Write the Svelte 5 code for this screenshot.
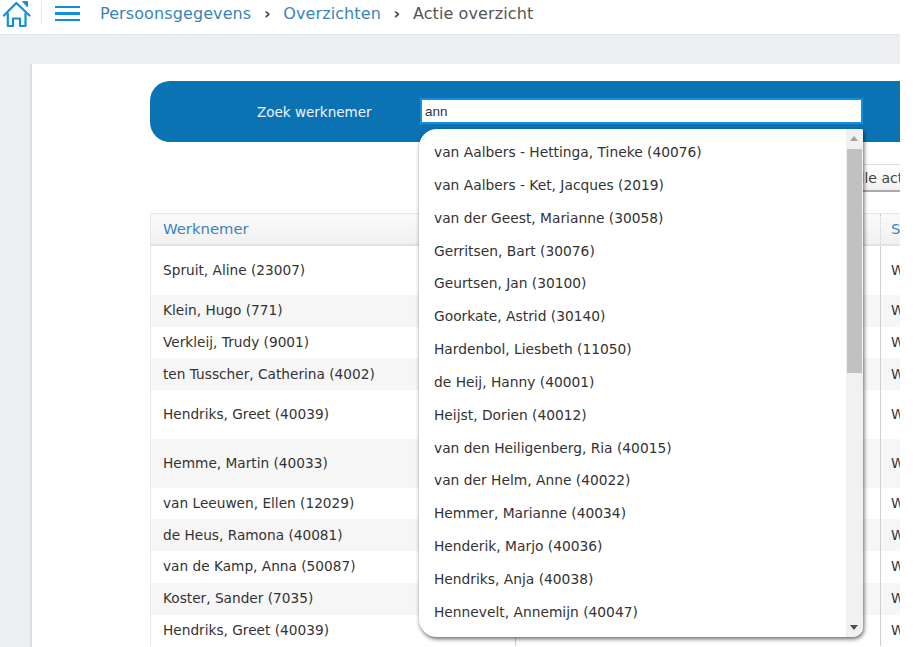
<script>
  const rows = [
    ['Spruit, Aline (23007)', 'tall'],
    ['Klein, Hugo (771)', 'alt'],
    ['Verkleij, Trudy (9001)', ''],
    ['ten Tusscher, Catherina (4002)', 'alt'],
    ['Hendriks, Greet (40039)', 'tall'],
    ['Hemme, Martin (40033)', 'tall alt'],
    ['van Leeuwen, Ellen (12029)', ''],
    ['de Heus, Ramona (40081)', 'alt'],
    ['van de Kamp, Anna (50087)', ''],
    ['Koster, Sander (7035)', 'alt'],
    ['Hendriks, Greet (40039)', '']
  ];
  const options = [
    'van Aalbers - Hettinga, Tineke (40076)',
    'van Aalbers - Ket, Jacques (2019)',
    'van der Geest, Marianne (30058)',
    'Gerritsen, Bart (30076)',
    'Geurtsen, Jan (30100)',
    'Goorkate, Astrid (30140)',
    'Hardenbol, Liesbeth (11050)',
    'de Heij, Hanny (40001)',
    'Heijst, Dorien (40012)',
    'van den Heiligenberg, Ria (40015)',
    'van der Helm, Anne (40022)',
    'Hemmer, Marianne (40034)',
    'Henderik, Marjo (40036)',
    'Hendriks, Anja (40038)',
    'Hennevelt, Annemijn (40047)'
  ];
</script>

<div class="page">
  <header class="topbar">
    <svg class="home" viewBox="0 0 30 28" width="30" height="28" aria-hidden="true">
      <path d="M1 15.5 L13.3 3 L26.5 15.5" fill="none" stroke="#0f8fdc" stroke-width="2.2" stroke-linejoin="round" stroke-linecap="round"/>
      <path d="M4.8 13 V26 H10 V18.5 H17 V26 H22.5 V13" fill="none" stroke="#0f8fdc" stroke-width="2.2" stroke-linejoin="round"/>
      <path d="M19.5 1.5 H24.5 V7 Z" fill="#0f8fdc" stroke="#0f8fdc" stroke-width="1"/>
    </svg>
    <span class="sep"></span>
    <span class="burger"><i></i><i></i><i></i></span>
    <nav class="crumbs">
      <a href="#p">Persoonsgegevens</a>
      <b>›</b>
      <a href="#o">Overzichten</a>
      <b>›</b>
      <span>Actie overzicht</span>
    </nav>
  </header>

  <main class="main">
    <section class="card">
      <div class="search">
        <label for="zoek">Zoek werknemer</label>
        <input id="zoek" value="ann" />
      </div>
      <div class="tools"><button>Alle acties</button></div>
      <div class="table">
        <div class="row head">
          <div class="cell">Werknemer</div>
          <div class="cell"></div>
          <div class="cell">Status</div>
        </div>
        {#each rows as r}
          <div class="row {r[1]}">
            <div class="cell">{r[0]}</div>
            <div class="cell"></div>
            <div class="cell">W</div>
          </div>
        {/each}
      </div>
    </section>
  </main>

  <div class="dropdown">
    <ul>
      {#each options as o}
        <li>{o}</li>
      {/each}
    </ul>
    <div class="scroll">
      <span class="arrow up"></span>
      <span class="thumb"></span>
      <span class="arrow down"></span>
    </div>
  </div>
</div>

<style>
  :global(body) {
    margin: 0;
    background: #fff;
  }
  .page {
    position: relative;
    width: 900px;
    height: 647px;
    overflow: hidden;
    background: #eceef1;
    font-family: "DejaVu Sans", sans-serif;
    font-size: 14px;
    color: #333;
  }
  .topbar {
    height: 34px;
    background: #fff;
    display: flex;
    align-items: center;
    padding-left: 3px;
    box-sizing: border-box;
    box-shadow: 0 1px 1px #e4e5e8;
  }
  .home {
    display: block;
    margin-top: -7px;
  }
  .sep {
    width: 1px;
    height: 24px;
    background: #e8e8e8;
    margin: -8px 13px 0 8px;
  }
  .burger {
    display: flex;
    flex-direction: column;
    gap: 4px;
    width: 25px;
    margin-top: -7px;
  }
  .burger i {
    height: 2.5px;
    background: #0f8fdc;
  }
  .crumbs {
    margin-left: 20px;
    display: flex;
    gap: 12px;
    align-items: baseline;
    font-size: 16px;
    margin-top: -8px;
    letter-spacing: 0.1px;
  }
  .crumbs a {
    color: #3b84b8;
    text-decoration: none;
  }
  .crumbs b {
    font-weight: 700;
    color: #444;
    width: 8px;
    text-align: center;
  }
  .crumbs span {
    color: #555;
  }
  .main {
    padding: 30px 0 0 30px;
  }
  .card {
    background: #fff;
    border-left: 2px solid #dcdcdc;
    padding: 17px 0 0 118px;
    height: 583px;
    box-sizing: border-box;
    overflow: hidden;
  }
  .search {
    height: 61px;
    width: 780px;
    background: #0b73b3;
    border-radius: 20px 0 0 20px;
    display: flex;
    align-items: center;
    box-sizing: border-box;
    padding-left: 107px;
  }
  .search label {
    width: 163px;
    color: #eef5fa;
    font-size: 13.5px;
    font-weight: 400;
  }
  .search input {
    width: 443px;
    height: 26px;
    box-sizing: border-box;
    margin-top: -1px;
    border: 2px solid #1490e0;
    outline: none;
    padding: 0 3px;
    font-family: "Liberation Sans", sans-serif;
    font-size: 13.5px;
    color: #333;
    background: #fff;
  }
  .tools {
    height: 71px;
    padding: 22px 0 0 692px;
    box-sizing: border-box;
  }
  .tools button {
    display: block;
    height: 28px;
    width: 100px;
    text-align: left;
    padding: 0 0 0 8px;
    white-space: nowrap;
    background: linear-gradient(#fff, #f1f1f1);
    border: 1px solid #ddd;
    border-bottom: 2px solid #aaa;
    font: 14px "DejaVu Sans", sans-serif;
    color: #444;
  }
  .table {
    width: 780px;
    border-left: 1px solid #e8e8e8;
  }
  .row {
    display: grid;
    grid-template-columns: 364px 365px 50px;
    height: 31.75px;
    align-items: stretch;
    font-size: 13.7px;
    color: #333;
  }
  .row.tall {
    height: 48.75px;
  }
  .row.alt {
    background: #f6f6f6;
  }
  .row.head {
    background: linear-gradient(#fafafa, #f1f1f1);
    border-top: 1px solid #e6e6e6;
    border-bottom: 2px solid #e2e2e2;
    color: #3b84b8;
    font-size: 14.8px;
    box-sizing: content-box;
    height: 30px;
  }
  .cell {
    display: flex;
    align-items: center;
    padding-left: 12px;
    padding-bottom: 1px;
    white-space: nowrap;
    overflow: hidden;
    box-sizing: border-box;
    border-left: 1px solid #cfcfcf;
  }
  .tall .cell {
    padding-bottom: 0;
  }
  .cell:first-child {
    border-left: none;
  }
  .cell:last-child {
    padding-left: 10px;
  }
  .head .cell {
    border-left: 1px dotted #ccc;
  }
  .head .cell:first-child {
    border-left: none;
  }
  .dropdown {
    position: absolute;
    left: 419px;
    top: 129px;
    width: 444px;
    height: 508px;
    background: #fff;
    border-radius: 18px 2px 10px 18px;
    box-shadow: 1px 2px 4px rgba(0, 0, 0, 0.6);
    display: flex;
    overflow: hidden;
  }
  .dropdown ul {
    list-style: none;
    margin: 0;
    padding: 7px 0 0 15px;
    flex: 1;
    font-size: 13.8px;
    color: #333;
  }
  .dropdown li {
    height: 32.85px;
    line-height: 32.85px;
    white-space: nowrap;
  }
  .scroll {
    width: 17px;
    background: #f1f1f1;
    position: relative;
  }
  .thumb {
    position: absolute;
    top: 20px;
    left: 1px;
    width: 15px;
    height: 224px;
    background: #c1c1c1;
  }
  .arrow {
    position: absolute;
    left: 4px;
    width: 0;
    height: 0;
    border-left: 4px solid transparent;
    border-right: 4px solid transparent;
  }
  .arrow.up {
    top: 7px;
    border-bottom: 5px solid #a3a3a3;
  }
  .arrow.down {
    bottom: 7px;
    border-top: 5px solid #505050;
  }
</style>
